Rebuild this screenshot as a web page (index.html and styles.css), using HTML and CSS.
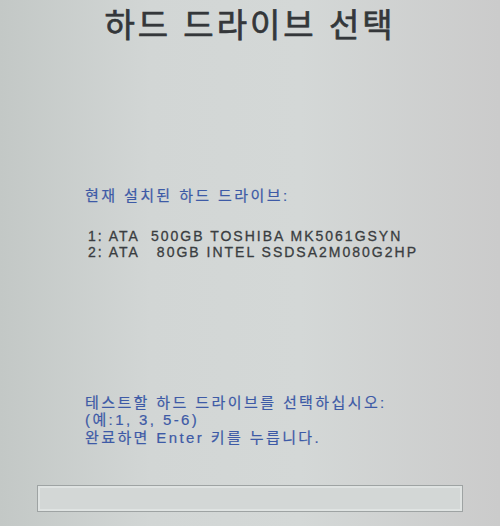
FILE: index.html
```html
<!DOCTYPE html>
<html lang="ko">
<head>
<meta charset="utf-8">
<link rel="stylesheet" href="styles.css">
</head>
<body>
<div class="screen">
  <h1 class="title">하드 드라이브 선택</h1>
  <div class="section installed">
    <div class="label">현재 설치된 하드 드라이브:</div>
    <div class="drives">
      <div class="drive">1: ATA  500GB TOSHIBA MK5061GSYN</div>
      <div class="drive">2: ATA   80GB INTEL SSDSA2M080G2HP</div>
    </div>
  </div>
  <div class="section prompt">
    <div class="label">테스트할 하드 드라이브를 선택하십시오:</div>
    <div class="label">(예:1, 3, 5-6)</div>
    <div class="label">완료하면 Enter 키를 누릅니다.</div>
  </div>
  <div class="input-box"></div>
</div>
</body>
</html>
```
FILE: styles.css
```css
html, body {
  margin: 0;
  padding: 0;
}
body {
  width: 500px;
  height: 526px;
  overflow: hidden;
  font-family: "Liberation Sans", "Noto Sans CJK KR", sans-serif;
  background: linear-gradient(90deg, #c3c8c6 0%, #d2d6d5 30%, #d4d8d7 60%, #cbcbcb 100%);
}
.screen {
  display: flex;
  flex-direction: column;
  height: 526px;
}
.title {
  margin: 7px 0 0 0;
  text-align: center;
  font-size: 33px;
  font-weight: normal;
  -webkit-text-stroke: 0.7px #34373a;
  letter-spacing: 3px;
  color: #34373a;
  line-height: 38px;
}
.section {
  padding-left: 85px;
}
.installed {
  margin-top: 142px;
}
.label {
  font-size: 15px;
  line-height: 17.5px;
  color: #3d5aa6;
  -webkit-text-stroke: 0.2px #3d5aa6;
  letter-spacing: 2.4px;
  white-space: pre;
}
.drives {
  margin-top: 23px;
  padding-left: 3px;
}
.drive {
  font-size: 14px;
  line-height: 16px;
  color: #3a3d40;
  -webkit-text-stroke: 0.3px #3a3d40;
  letter-spacing: 2px;
  white-space: pre;
}
.prompt {
  margin-top: 134px;
}
.input-box {
  margin: 39px 37px 0 37px;
  height: 25px;
  border: 1px solid #9ea3a3;
  box-shadow: inset 0 0 0 2px #dfe3e2;
  background: #d3d7d6;
}
```
